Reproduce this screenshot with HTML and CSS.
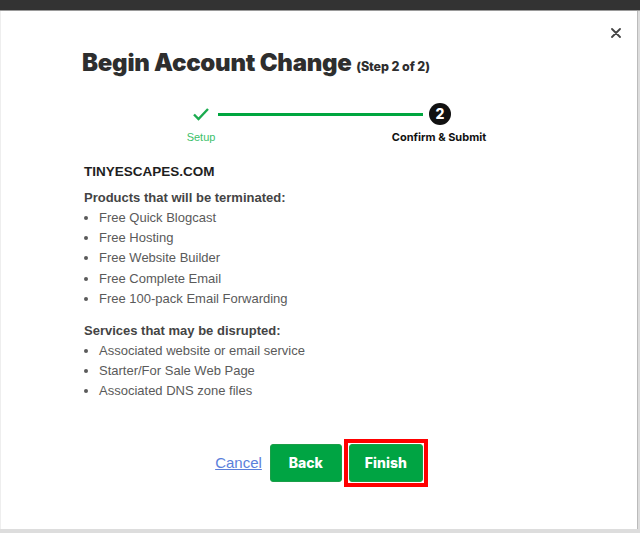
FILE: index.html
```html
<!DOCTYPE html>
<html>
<head>
<meta charset="utf-8">
<link rel="stylesheet" href="styles.css">
</head>
<body>
<div class="topbar"></div>
<div class="modal">
  <button class="close" aria-label="Close">
    <svg width="10" height="10" viewBox="0 0 10 10"><path d="M1 1L9 9M9 1L1 9" stroke="#444" stroke-width="1.8" stroke-linecap="round"/></svg>
  </button>
  <h1 class="title">Begin Account Change <span class="step">(Step 2 of 2)</span></h1>
  <div class="stepper">
    <div class="track">
      <svg class="check" width="18" height="14" viewBox="0 0 18 14"><path d="M2 7.5L6.5 12L16 2" fill="none" stroke="#1bab4f" stroke-width="2.4"/></svg>
      <div class="line"></div>
      <div class="num">2</div>
    </div>
    <div class="labels">
      <span class="lab done">Setup</span>
      <span class="lab cur">Confirm &amp; Submit</span>
    </div>
  </div>
  <div class="content">
    <div class="domain">TINYESCAPES.COM</div>
    <div class="sect">Products that will be terminated:</div>
    <ul class="list">
      <li>Free Quick Blogcast</li>
      <li>Free Hosting</li>
      <li>Free Website Builder</li>
      <li>Free Complete Email</li>
      <li>Free 100-pack Email Forwarding</li>
    </ul>
    <div class="sect sect2">Services that may be disrupted:</div>
    <ul class="list">
      <li>Associated website or email service</li>
      <li>Starter/For Sale Web Page</li>
      <li>Associated DNS zone files</li>
    </ul>
  </div>
  <div class="actions">
    <a class="cancel" href="#">Cancel</a>
    <button class="btn">Back</button>
    <span class="hl"><button class="btn">Finish</button></span>
  </div>
</div>
</body>
</html>
```
FILE: styles.css
```css
html, body { margin: 0; padding: 0; }
body {
  width: 640px;
  height: 533px;
  background: #ddd;
  overflow: hidden;
  font-family: "Liberation Sans", Arial, sans-serif;
}
.topbar {
  height: 10px;
  background: #333;
  border-bottom: 1px solid #9a9a9a;
}
.modal {
  position: relative;
  background: #fff;
  height: 518px;
  margin-right: 2px;
  border-right: 1px solid #bbb;
  border-left: 1px solid #eee;
}
.close {
  position: absolute;
  right: 14px;
  top: 13px;
  border: 0;
  background: none;
  padding: 2px;
  cursor: pointer;
}
.title {
  margin: 0;
  padding: 37px 0 0 81px;
  font-family: Inter, "Liberation Sans", sans-serif;
  font-weight: 900;
  font-size: 24px;
  letter-spacing: -0.25px;
  color: #2e2e2e;
  line-height: 30px;
}
.step {
  font-size: 12.5px;
  font-weight: 800;
  letter-spacing: -0.1px;
}
.stepper { margin-top: 20px; }
.track {
  display: flex;
  align-items: center;
  padding-left: 191px;
  height: 24px;
}
.check { display: block; }
.line {
  width: 205px;
  height: 3px;
  background: #00a63f;
  margin: 0 6px 0 8px;
}
.num {
  width: 22px;
  height: 22px;
  border-radius: 50%;
  background: #111;
  color: #fff;
  font-family: Inter, sans-serif;
  font-weight: 800;
  font-size: 14px;
  line-height: 22px;
  text-align: center;
}
.labels {
  display: flex;
  margin-top: 4px;
  padding-left: 170px;
  gap: 148px;
}
.lab {
  font-size: 11px;
  text-align: center;
  line-height: 14px;
}
.done { width: 60px; color: #3cbf6a; font-family: "Liberation Sans", Arial, sans-serif; }
.cur {
  width: 120px;
  color: #111;
  font-family: Inter, sans-serif;
  font-weight: 700;
  font-size: 11px;
}
.content {
  padding-left: 83px;
  margin-top: 20px;
  color: #555;
}
.domain {
  font-weight: 700;
  font-size: 13.5px;
  color: #1e1e1e;
  line-height: 16px;
}
.sect {
  margin-top: 8px;
  font-weight: 700;
  font-size: 13px;
  color: #444;
  line-height: 20px;
}
.sect2 { margin-top: 12px; }
.list {
  margin: 0;
  padding: 0 0 0 15px;
  font-size: 13px;
  line-height: 20.2px;
  color: #5a5a5a;
}
.list li { padding-left: 0; }
.actions {
  display: flex;
  align-items: center;
  justify-content: center;
  gap: 8px;
  margin-top: 37px;
  padding-left: 5px;
}
.cancel {
  color: #5b7fdb;
  font-size: 15px;
  text-decoration: underline;
}
.btn {
  width: 72px;
  height: 38px;
  border: 1px solid #1b9f48;
  border-radius: 3px;
  background: #00a443;
  color: #fff;
  font-family: Inter, sans-serif;
  font-weight: 800;
  font-size: 14px;
  padding: 0;
}
.hl {
  display: inline-flex;
  border: 4px solid #f00;
  padding: 1px;
  margin-left: -6px;
}
.hl .btn { width: 74px; }
```
